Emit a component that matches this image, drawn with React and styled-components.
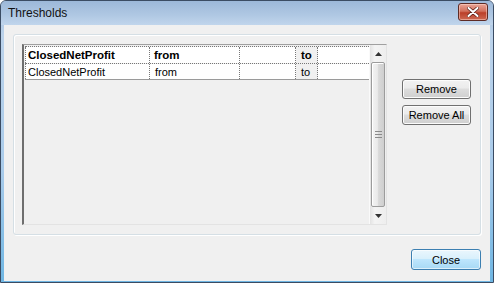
import styled, { createGlobalStyle } from 'styled-components'

const GlobalStyle = createGlobalStyle`
  body {
    margin: 0;
    background: #fff;
  }
  * {
    box-sizing: border-box;
  }
`

const font = `"Liberation Sans", Arial, sans-serif`

// Window frame
const Window = styled.div`
  width: 494px;
  height: 283px;
  display: flex;
  flex-direction: column;
  border: 1px solid #3b4c63;
  border-radius: 6px 6px 0 0;
  background: linear-gradient(#a2bddc, #bcd3eb 12%, #a9cbea 60%, #6fb6e3);
  font-family: ${font};
  overflow: hidden;
`

const TitleBar = styled.div`
  height: 24px;
  flex: none;
  display: flex;
  align-items: center;
  justify-content: space-between;
  padding: 0 5px 0 7px;
  background: linear-gradient(#9cb8d9, #b0c8e3 60%, #c0d5ec);
`

const Title = styled.span`
  font-size: 12px;
  color: #111;
  margin-top: -1px;
`

const CaptionClose = styled.div`
  width: 30px;
  height: 18px;
  margin-top: -3px;
  display: flex;
  align-items: center;
  justify-content: center;
  border: 1px solid #5e2b25;
  border-radius: 3px;
  background: linear-gradient(#eaa597, #d1705d 45%, #bb3f29 55%, #cd6a54);
  box-shadow: inset 0 0 0 1px rgba(255, 220, 210, 0.5);
`

const Client = styled.div`
  flex: 1;
  margin: 0 3px 3px 3px;
  background: #f0f0f0;
  display: flex;
  flex-direction: column;
  padding: 9px 9px 11px 9px;
`

const Group = styled.div`
  height: 201px;
  display: flex;
  gap: 15px;
  padding: 9px 9px 9px 8px;
  border: 1px solid #d5dfe5;
  border-radius: 3px;
  box-shadow: inset 1px 1px 0 #fff, 1px 1px 0 #fff;
`

// Grid
const Grid = styled.div`
  width: 367px;
  height: 181px;
  display: flex;
  border-style: solid;
  border-width: 1px 1px 1px 2px;
  border-color: #a0a0a0 #e3e3e3 #e3e3e3 #6e6e6e;
  background: #f0f0f0;
`

const Table = styled.div`
  flex: 1;
  display: flex;
  flex-direction: column;
  padding-top: 1px;
`

const Row = styled.div`
  display: grid;
  grid-template-columns: 125px 90px 56px 22px 1fr;
  height: 17px;
  border-top: 1px dotted #777;
  border-bottom: ${(p) => (p.last ? '1px solid #9a9a9a' : 'none')};
  margin-left: 1px;
`

const Cell = styled.div`
  display: flex;
  align-items: center;
  padding-left: ${(p) => (p.pad ?? 4)}px;
  border-right: ${(p) => (p.noLine ? 'none' : '1px dotted #777')};
  border-left: ${(p) => (p.first ? '1px dotted #777' : 'none')};
  background: ${(p) => (p.shade ? '#f0f0f0' : '#fff')};
  font-size: ${(p) => (p.head ? '11.5px' : '11px')};
  font-weight: ${(p) => (p.head ? 700 : 400)};
  color: #000;
  white-space: nowrap;
`

// Scrollbar
const ScrollBar = styled.div`
  width: 17px;
  display: flex;
  flex-direction: column;
  background: linear-gradient(90deg, #e3e3e3, #f4f4f4 30%, #eeeeee);
  border-left: 1px solid #fafafa;
`

const Arrow = styled.div`
  height: 17px;
  flex: none;
  display: flex;
  align-items: center;
  justify-content: center;
`

const Thumb = styled.div`
  flex: 1;
  margin: 0 1px;
  display: flex;
  align-items: center;
  justify-content: center;
  border: 1px solid #9c9c9c;
  border-radius: 2px;
  background: linear-gradient(90deg, #f4f4f4, #eaeaea 45%, #d9d9d9 55%, #cfcfcf);
  box-shadow: inset 1px 1px 0 #fff;
`

// Buttons
const ButtonColumn = styled.div`
  display: flex;
  flex-direction: column;
  gap: 6px;
  padding-top: 35px;
`

const Button = styled.div`
  width: ${(p) => p.width || 69}px;
  height: ${(p) => p.height || 20}px;
  display: flex;
  align-items: center;
  justify-content: center;
  font-size: 11px;
  color: #000;
  border: 1px solid ${(p) => (p.focus ? '#3c7fb1' : '#707070')};
  border-radius: 3px;
  background: ${(p) =>
    p.focus
      ? 'linear-gradient(#eaf6fd, #d9f0fc 45%, #bee6fd 50%, #a7d9f5)'
      : 'linear-gradient(#f2f2f2, #ebebeb 45%, #dddddd 50%, #cfcfcf)'};
  box-shadow: inset 0 0 0 1px ${(p) => (p.focus ? 'rgba(255,255,255,0.6)' : '#fcfcfc')};
`

const Footer = styled.div`
  display: flex;
  justify-content: flex-end;
  padding-top: 14px;
`

const columns = ['ClosedNetProfit', 'from', '', 'to', '']

function TableRow({ head, last }) {
  return (
    <Row last={last}>
      {columns.map((text, i) => (
        <Cell
          key={i}
          head={head}
          first={i === 0}
          shade={i === 3}
          pad={i === 3 ? 5 : i === 1 ? (head ? 4 : 5) : 2}
          noLine={i === 4}
        >
          {text}
        </Cell>
      ))}
    </Row>
  )
}

function App() {
  return (
    <>
      <GlobalStyle />
      <Window>
        <TitleBar>
          <Title>Thresholds</Title>
          <CaptionClose>
            <svg width="12" height="10" viewBox="0 0 12 10">
              <path d="M1.5 1 L10.5 9 M10.5 1 L1.5 9" stroke="#5a1e16" strokeWidth="3.4" strokeLinecap="round" />
              <path d="M1.5 1 L10.5 9 M10.5 1 L1.5 9" stroke="#fff" strokeWidth="2" strokeLinecap="round" />
            </svg>
          </CaptionClose>
        </TitleBar>
        <Client>
          <Group>
            <Grid>
              <Table>
                <TableRow head />
                <TableRow last />
              </Table>
              <ScrollBar>
                <Arrow>
                  <svg width="7" height="4" viewBox="0 0 7 4">
                    <path d="M3.5 0 L7 4 L0 4 Z" fill="#333" />
                  </svg>
                </Arrow>
                <Thumb>
                  <svg width="7" height="7" viewBox="0 0 7 7">
                    <path d="M0 0.5 H7 M0 3.5 H7 M0 6.5 H7" stroke="#8a8a8a" strokeWidth="1" />
                  </svg>
                </Thumb>
                <Arrow>
                  <svg width="7" height="4" viewBox="0 0 7 4">
                    <path d="M0 0 L7 0 L3.5 4 Z" fill="#333" />
                  </svg>
                </Arrow>
              </ScrollBar>
            </Grid>
            <ButtonColumn>
              <Button>Remove</Button>
              <Button>Remove All</Button>
            </ButtonColumn>
          </Group>
          <Footer>
            <Button focus width={70} height={21}>Close</Button>
          </Footer>
        </Client>
      </Window>
    </>
  )
}

export default App
